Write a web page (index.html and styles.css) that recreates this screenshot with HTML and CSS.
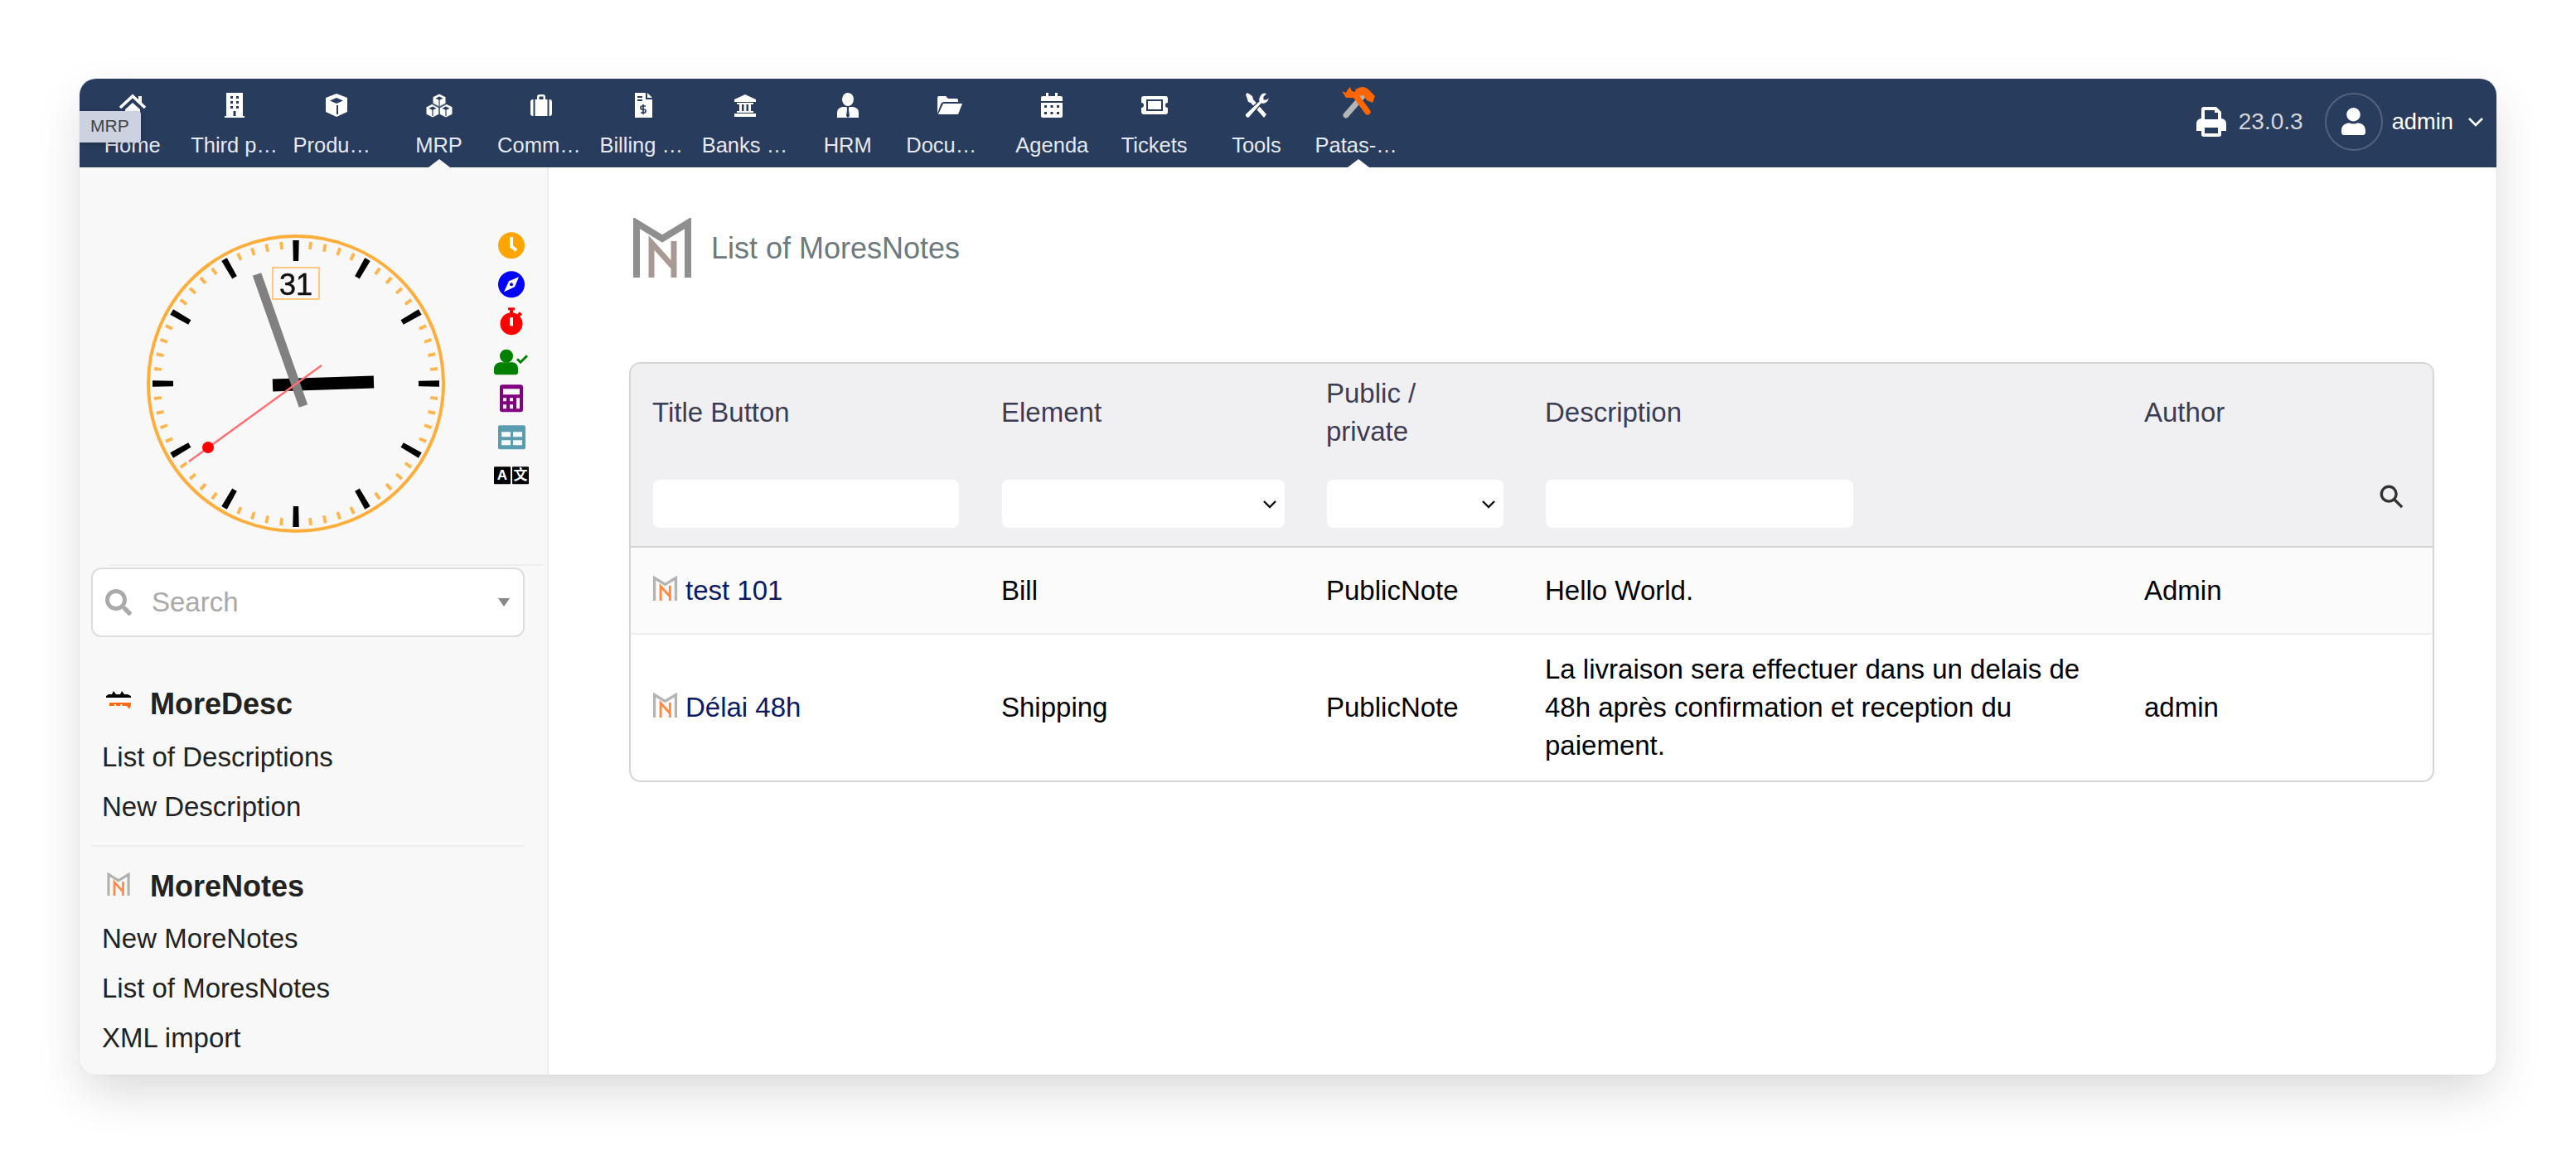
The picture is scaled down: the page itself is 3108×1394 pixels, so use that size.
FILE: index.html
```html
<!DOCTYPE html>
<html lang="en">
<head>
    <meta charset="UTF-8">
    <meta name="viewport" content="width=device-width, initial-scale=1.0">
    <title>List of MoresNotes</title>
    <link rel="stylesheet" href="styles.css">
</head>
<body>

    <svg class="defs" width="0" height="0">
        <symbol id="more-logo" viewBox="0 0 70 72">
            <path class="logo-m" d="M4 72V6l31 19L66 6v66" fill="none" stroke-width="8"/>
            <path class="logo-n" d="M22 72V30l27 30V28M49 28v44" fill="none" stroke-width="7"/>
        </symbol>
    </svg>

    <div class="window">

        <nav class="topbar">
            <a class="nav-item">
                <svg class="nav-icon" viewBox="0 0 32 32"><path d="M1 19 16 5l15 14" fill="none" stroke="#fff" stroke-width="3.5"/><path d="M7 21l9-8 9 8v10H7z" fill="#fff"/><rect x="23" y="5" width="4" height="8" fill="#fff"/></svg>
                <span class="nav-label">Home</span>
            </a>
            <a class="nav-item">
                <svg class="nav-icon" viewBox="0 0 32 32"><path d="M6 1h20v28h2v2H4v-2h2z" fill="#fff"/><path d="M11 5h3v3h-3zM18 5h3v3h-3zM11 11h3v3h-3zM18 11h3v3h-3zM11 17h3v3h-3zM18 17h3v3h-3zM14.5 23h3v6h-3z" fill="#283c5e"/></svg>
                <span class="nav-label">Third parties</span>
            </a>
            <a class="nav-item">
                <svg class="nav-icon" viewBox="0 0 32 32"><path d="M16 2l13 5v17l-13 6-13-6V7z" fill="#fff"/><path d="M16 7l8 3.5-8 3.5-8-3.5z" fill="#283c5e"/><path d="M17 16v11" stroke="#283c5e" stroke-width="2"/></svg>
                <span class="nav-label">Products | Services</span>
            </a>
            <a class="nav-item active-grey">
                <svg class="nav-icon" viewBox="0 0 32 32"><path d="M16 2l8 4v9l-8 4-8-4V6zM8 14l8 4v9l-8 4-8-4v-9zM24 14l8 4v9l-8 4-8-4v-9z" fill="#fff" stroke="#283c5e" stroke-width="1"/><path d="M16 5.500l4.500 2.200-4.500 2.300-4.500-2.300zM8 17.500l4.500 2.200L8 22l-4.500-2.300zM24 17.500l4.500 2.200L24 22l-4.500-2.300z" fill="#283c5e"/><path d="M16 10v7M8 22v7M24 22v7" stroke="#283c5e" stroke-width="1.2"/></svg>
                <span class="nav-label">MRP</span>
            </a>
            <a class="nav-item">
                <svg class="nav-icon" viewBox="0 0 32 32"><path d="M11 9V6a3 3 0 0 1 3-3h4a3 3 0 0 1 3 3v3h5a3 3 0 0 1 3 3v14a3 3 0 0 1-3 3H6a3 3 0 0 1-3-3V12a3 3 0 0 1 3-3zm2.500 0h5V5.500h-5z" fill="#fff"/><path d="M7.500 8v22M24.500 8v22" stroke="#283c5e" stroke-width="2"/></svg>
                <span class="nav-label">Commerce</span>
            </a>
            <a class="nav-item">
                <svg class="nav-icon" viewBox="0 0 32 32"><path d="M6 1h13v8h8v22H6z" fill="#fff"/><path d="M21 1l6 6h-6z" fill="#fff"/><path d="M9 6h6M9 10h6" stroke="#283c5e" stroke-width="2"/><path d="M19 17h-4a1.500 1.500 0 0 0 0 4h2a1.500 1.500 0 0 1 0 4h-4M16 15v12" fill="none" stroke="#283c5e" stroke-width="1.700"/></svg>
                <span class="nav-label">Billing &amp; Payments</span>
            </a>
            <a class="nav-item">
                <svg class="nav-icon" viewBox="0 0 32 32"><path d="M16 3l13 6v3H3V9zM3 26h26v4H3zM6 23h20v2H6zM6 13h20v2H6z" fill="#fff"/><path d="M9 15h3v8H9zM14.500 15h3v8h-3zM20 15h3v8h-3z" fill="#fff"/></svg>
                <span class="nav-label">Banks &amp; Cash</span>
            </a>
            <a class="nav-item">
                <svg class="nav-icon" viewBox="0 0 32 32"><ellipse cx="16" cy="9" rx="7" ry="8" fill="#fff"/><path d="M3 31v-6c0-5 4-7 8-7h10c4 0 8 2 8 7v6z" fill="#fff"/><path d="M14.500 18h3l-.6 3 1.100 8-2 2-2-2 1.100-8z" fill="#283c5e"/></svg>
                <span class="nav-label">HRM</span>
            </a>
            <a class="nav-item">
                <svg class="nav-icon" viewBox="0 0 32 32"><path d="M1 26V7a2 2 0 0 1 2-2h8l3 3h10a2 2 0 0 1 2 2v2H9c-2 0-3 1-4 3z" fill="#fff"/><path d="M8 14h23l-5 13H2z" fill="#fff"/></svg>
                <span class="nav-label">Documents</span>
            </a>
            <a class="nav-item">
                <svg class="nav-icon" viewBox="0 0 32 32"><path d="M3 11V7a2 2 0 0 1 2-2h4V1h3v4h8V1h3v4h4a2 2 0 0 1 2 2v4zM3 13h26v16a2 2 0 0 1-2 2H5a2 2 0 0 1-2-2z" fill="#fff"/><path d="M7 16h3v3H7zM14.500 16h3v3h-3zM22 16h3v3h-3zM7 24h3v3H7zM14.500 24h3v3h-3zM22 24h3v3h-3z" fill="#283c5e"/></svg>
                <span class="nav-label">Agenda</span>
            </a>
            <a class="nav-item">
                <svg class="nav-icon" viewBox="0 0 32 32"><path d="M3 5h26a3 3 0 0 1 3 3v5a3 3 0 0 0 0 6v5a3 3 0 0 1-3 3H3a3 3 0 0 1-3-3v-5a3 3 0 0 0 0-6V8a3 3 0 0 1 3-3z" fill="#fff"/><rect x="7" y="10" width="18" height="12" fill="#fff" stroke="#283c5e" stroke-width="2"/></svg>
                <span class="nav-label">Tickets</span>
            </a>
            <a class="nav-item">
                <svg class="nav-icon" viewBox="0 0 32 32"><path d="M3 3l2-2 6 4 1 4 16 18-3 4L9 13l-3-1z" fill="#fff"/><path d="M20 5a6 6 0 0 1 9-3l-4 4v3h3l3-3a7 7 0 0 1-9 8L8 30a3 3 0 0 1-5-4l16-15c-1-2 0-4 1-6z" fill="#fff" stroke="#283c5e" stroke-width="1.200"/></svg>
                <span class="nav-label">Tools</span>
            </a>
            <a class="nav-item active-white">
                <svg class="nav-icon patas-icon" viewBox="0 0 42 40"><path d="M6 36L27 12" stroke="#b5b5b5" stroke-width="7" stroke-linecap="round"/><path d="M18 5c5-4 11-4 15 0l8 8-3 8-7-3-4-6-6 1z" fill="#f60"/><path d="M8 5l3-3 2 5 4 1 1-5 3 8 14 19a3.500 3.500 0 0 1-6 4L15 15l-9 0-5-8 5 2z" fill="#f60"/></svg>
                <span class="nav-label">Patas-Tools</span>
            </a>

            <div class="nav-right">
                <svg class="print-icon" viewBox="0 0 36 36"><path d="M6 14V3a3 3 0 0 1 3-3h15l6 6v8a6 6 0 0 1 6 6v9h-6v4a3 3 0 0 1-3 3H9a3 3 0 0 1-3-3v-4H0v-9a6 6 0 0 1 6-6zm4-10v11h16V7h-4V4zm0 21v7h16v-7z" fill="#fff" fill-rule="evenodd"/></svg>
                <span class="version">23.0.3</span>
                <span class="avatar">
                    <svg viewBox="0 0 448 512"><path d="M224 256c70.700 0 128-57.300 128-128S294.700 0 224 0 96 57.300 96 128s57.300 128 128 128zm89.600 32h-16.700c-22.200 10.200-46.900 16-72.900 16s-50.600-5.800-72.900-16h-16.700C60.200 288 0 348.200 0 422.400V464c0 26.500 21.500 48 48 48h352c26.500 0 48-21.500 48-48v-41.600c0-74.200-60.200-134.400-134.400-134.400z" fill="#fff"/></svg>
                </span>
                <span class="user-name">admin</span>
                <svg class="user-caret" viewBox="0 0 20 12"><path d="M2 2l8 8 8-8" fill="none" stroke="#fff" stroke-width="2.600"/></svg>
            </div>
        </nav>

        <div class="tooltip">MRP</div>

        <div class="content">
            <aside class="sidebar">
                <div class="clock-area">
                    <svg class="clock" viewBox="-190 -190 380 380">
                        <circle r="178" fill="none" stroke="#ffad3b" stroke-width="4"/>
                        <circle r="167.500" pathLength="60" fill="none" stroke="#ffb54d" stroke-width="9" stroke-dasharray=".22 .78" stroke-dashoffset=".11"/>
                        <circle r="160.500" pathLength="12" fill="none" stroke="#000" stroke-width="25" stroke-dasharray=".083 .917" stroke-dashoffset=".0415"/>
                        <rect x="-28" y="-140" width="56" height="38" fill="none" stroke="#ffc880" stroke-width="2"/>
                        <text class="clock-date" x="0" y="-107" text-anchor="middle">31</text>
                        <path d="M-28 2L94-2" stroke="#000" stroke-width="15"/>
                        <path d="M-47-132L9 27" stroke="#808080" stroke-width="11"/>
                        <path d="M-129 94L31-22" stroke="#ff6f73" stroke-width="2.500"/>
                        <circle cx="-106" cy="77" r="7" fill="#f00"/>
                    </svg>
                    <div class="quick-icons">
                        <svg viewBox="0 0 48 46"><circle cx="24" cy="23" r="16" fill="#ffa500"/><path d="M24 13v11l6 5" fill="none" stroke="#fff" stroke-width="4"/></svg>
                        <svg viewBox="0 0 48 46"><circle cx="24" cy="23" r="16" fill="#00f"/><path d="M33 14l-12 5-6 13 13-6z" fill="#fff"/><circle cx="24" cy="23" r="2" fill="#00f"/></svg>
                        <svg viewBox="0 0 48 46"><circle cx="24" cy="24.500" r="13.500" fill="#f00"/><path d="M20 5h8v3h-2v4h-4V8h-2zM34 10l3 3-3 3-3-3z" fill="#f00"/><rect x="22" y="17" width="4" height="10" fill="#fff"/></svg>
                        <svg viewBox="0 0 48 46"><circle cx="18" cy="16.500" r="8" fill="green"/><path d="M3 36v-4c0-5 4-8 8-8h14c4 0 7 3 7 8v4a3 3 0 0 1-3 3H6a3 3 0 0 1-3-3z" fill="green"/><path d="M31 20l4 4 8-8" fill="none" stroke="green" stroke-width="3"/></svg>
                        <svg viewBox="0 0 48 46"><rect x="10" y="5" width="28" height="33" rx="3" fill="purple"/><path d="M14 10h20v7H14z" fill="#f8f8f8"/><path d="M14 21h4v4h-4zM22 21h4v4h-4zM30 21h4v13h-4zM14 29h4v5h-4zM22 29h4v5h-4z" fill="#f8f8f8"/></svg>
                        <svg viewBox="0 0 48 46"><rect x="8" y="7" width="33" height="29" rx="2" fill="#5b9db0"/><path d="M12 15h11v6H12zM26 15h11v6H26zM12 25h11v6H12zM26 25h11v6H26z" fill="#f8f8f8"/></svg>
                        <svg viewBox="0 0 48 46"><rect x="3" y="11" width="20" height="21" rx="1" fill="#000"/><rect x="25" y="11" width="20" height="21" rx="1" fill="#000"/><text class="lang-glyph" x="13" y="27" text-anchor="middle">A</text><text class="lang-glyph" x="35" y="27" text-anchor="middle">文</text></svg>
                    </div>
                </div>

                <div class="search-box">
                    <svg class="search-glass" viewBox="0 0 512 512"><path d="M505 442.700L405.300 343c-4.500-4.500-10.600-7-17-7H372c27.600-35.300 44-79.700 44-128C416 93.100 322.900 0 208 0S0 93.100 0 208s93.100 208 208 208c48.300 0 92.700-16.400 128-44v16.300c0 6.400 2.500 12.500 7 17l99.700 99.700c9.400 9.400 24.600 9.400 33.900 0l28.300-28.300c9.400-9.400 9.400-24.600.1-34zM208 336c-70.700 0-128-57.200-128-128 0-70.700 57.200-128 128-128 70.700 0 128 57.200 128 128 0 70.700-57.200 128-128 128z" fill="#aaa"/></svg>
                    <span class="search-text">Search</span>
                    <span class="search-caret"></span>
                </div>

                <div class="menu-block first">
                    <div class="menu-title">
                        <svg class="menu-icon desc-logo" viewBox="0 0 32 23"><path d="M1 9V7l3-2h4l2-4 3 4h5l2-4 3 4h4l4 2v2z" fill="#000"/><path d="M5 15h26v3l-2 5-3-4h-5l-1-2h-2v2h-5v-2h-2v2H5z" fill="#ff6a13"/></svg>
                        <span>MoreDesc</span>
                    </div>
                    <a class="menu-link">List of Descriptions</a>
                    <a class="menu-link">New Description</a>
                </div>

                <div class="menu-block">
                    <div class="menu-title">
                        <svg class="menu-icon small-logo"><use href="#more-logo"/></svg>
                        <span>MoreNotes</span>
                    </div>
                    <a class="menu-link">New MoreNotes</a>
                    <a class="menu-link">List of MoresNotes</a>
                    <a class="menu-link">XML import</a>
                </div>
            </aside>

            <main class="main">
                <div class="page-title">
                    <svg class="title-logo"><use href="#more-logo"/></svg>
                    <h1>List of MoresNotes</h1>
                </div>

                <div class="table-box">
                    <table class="notes-table">
                        <colgroup>
                            <col class="col-title">
                            <col class="col-element">
                            <col class="col-public">
                            <col class="col-desc">
                            <col class="col-author">
                        </colgroup>
                        <thead>
                            <tr class="head-row">
                                <th>Title Button</th>
                                <th>Element</th>
                                <th>Public /<br>private</th>
                                <th>Description</th>
                                <th>Author</th>
                            </tr>
                            <tr class="filter-row">
                                <td><div class="filter-field field-title"></div></td>
                                <td>
                                    <div class="filter-field field-element">
                                        <svg class="select-chevron" viewBox="0 0 20 12"><path d="M3 2l7 7 7-7" fill="none" stroke="#111" stroke-width="2.400"/></svg>
                                    </div>
                                </td>
                                <td>
                                    <div class="filter-field field-public">
                                        <svg class="select-chevron" viewBox="0 0 20 12"><path d="M3 2l7 7 7-7" fill="none" stroke="#111" stroke-width="2.400"/></svg>
                                    </div>
                                </td>
                                <td><div class="filter-field field-desc"></div></td>
                                <td class="filter-action">
                                    <svg class="filter-search" viewBox="0 0 32 32"><circle cx="13" cy="13" r="9.500" fill="none" stroke="#333" stroke-width="3.600"/><path d="M20 20l10 10" stroke="#333" stroke-width="3.600"/></svg>
                                </td>
                            </tr>
                        </thead>
                        <tbody>
                            <tr class="row-odd">
                                <td><a class="note-link"><svg class="row-logo"><use href="#more-logo"/></svg>test 101</a></td>
                                <td>Bill</td>
                                <td>PublicNote</td>
                                <td>Hello World.</td>
                                <td>Admin</td>
                            </tr>
                            <tr class="row-even">
                                <td><a class="note-link"><svg class="row-logo"><use href="#more-logo"/></svg>Délai 48h</a></td>
                                <td>Shipping</td>
                                <td>PublicNote</td>
                                <td>La livraison sera effectuer dans un delais de 48h après confirmation et reception du paiement.</td>
                                <td>admin</td>
                            </tr>
                        </tbody>
                    </table>
                </div>
            </main>
        </div>
    </div>

</body>
</html>
```

FILE: styles.css
```css
body {
    font-family: "Liberation Sans", Arial, sans-serif;
    font-size: 33px;
    line-height: 46px;
    margin: 0;
    padding: 0;
    background-color: #fff;
    color: #000;
}

.defs {
    position: absolute;
}

.window {
    position: relative;
    width: 2916px;
    height: 1202px;
    margin: 95px 0 0 96px;
    border-radius: 20px;
    overflow: hidden;
    background-color: #fff;
}

body::before {
    content: "";
    position: absolute;
    left: 96px;
    top: 95px;
    width: 2916px;
    height: 1202px;
    border-radius: 20px;
    box-shadow: 0 0 1px rgba(0, 0, 0, 0.35), 0 24px 60px -6px rgba(0, 0, 0, 0.16);
}

/* top bar */
.topbar {
    display: flex;
    height: 107px;
    padding-left: 2px;
    background-color: #283c5e;
}

.nav-item {
    position: relative;
    display: flex;
    flex-direction: column;
    align-items: center;
    width: 123.3px;
    flex: none;
    padding-top: 16px;
    box-sizing: border-box;
}

.nav-icon {
    width: 32px;
    height: 32px;
    display: block;
}

.patas-icon {
    width: 42px;
    height: 40px;
    margin-top: -8px;
}

.nav-label {
    display: block;
    width: 105.5px;
    margin-top: 15px;
    font-size: 25.5px;
    line-height: 34px;
    color: #e6e9f0;
    text-align: center;
    white-space: nowrap;
    overflow: hidden;
    text-overflow: ellipsis;
}

.active-grey::after,
.active-white::after {
    content: "";
    position: absolute;
    bottom: 0;
    left: 50%;
    margin-left: -13px;
    border-left: 13px solid transparent;
    border-right: 13px solid transparent;
    border-bottom: 10px solid #f8f8f8;
}

.active-white::after {
    border-bottom-color: #fff;
}

.nav-right {
    display: flex;
    align-items: center;
    margin-left: auto;
    padding-right: 15px;
    padding-bottom: 4px;
}

.print-icon {
    width: 36px;
    height: 36px;
}

.version {
    margin-left: 15px;
    font-size: 28px;
    color: #d4d6da;
}

.avatar {
    display: flex;
    align-items: center;
    justify-content: center;
    width: 70px;
    height: 70px;
    margin-left: 26px;
    box-sizing: border-box;
    border: 2px solid rgba(255, 255, 255, 0.2);
    border-radius: 50%;
}

.avatar svg {
    width: 29px;
    height: 33px;
}

.user-name {
    margin-left: 11px;
    font-size: 27.3px;
    color: #fff;
}

.user-caret {
    width: 20px;
    height: 12px;
    margin-left: 17px;
}

.tooltip {
    position: absolute;
    left: 0;
    top: 39px;
    width: 74px;
    height: 38px;
    padding-left: 13px;
    box-sizing: border-box;
    background-color: #ccd2df;
    color: #444;
    font-size: 21px;
    line-height: 36px;
    border-radius: 0 4px 4px 0;
    box-shadow: 0 2px 6px rgba(0, 0, 0, 0.25);
}

/* sidebar */
.content {
    display: flex;
    height: 1095px;
}

.sidebar {
    width: 566px;
    flex: none;
    padding-left: 14px;
    box-sizing: border-box;
    background-color: #f8f8f8;
    border-right: 2px solid #eee;
}

.clock-area {
    display: flex;
    height: 481px;
    box-sizing: border-box;
    margin: 0 5px 0 22px;
    padding: 71px 0 0 35px;
    border-bottom: 2px solid #eee;
}

.clock {
    width: 380px;
    height: 380px;
    flex: none;
    filter: blur(0.5px);
}

.clock-date {
    font-size: 36px;
    fill: #111;
    stroke: #111;
    stroke-width: 0.5px;
}

.quick-icons {
    display: flex;
    flex-direction: column;
    margin-left: 46px;
}

.quick-icons svg {
    display: block;
    width: 48px;
    height: 46.5px;
    flex: none;
}

.lang-glyph {
    font-family: "Liberation Sans", "Noto Sans CJK SC", sans-serif;
    font-size: 17px;
    font-weight: bold;
    fill: #fff;
}

.search-box {
    display: flex;
    align-items: center;
    width: 523px;
    height: 84px;
    margin-top: 2px;
    padding: 0 16px 0 15px;
    box-sizing: border-box;
    background-color: #fff;
    border: 2px solid #ddd;
    border-radius: 12px;
}

.search-glass {
    width: 32px;
    height: 32px;
}

.search-text {
    margin-left: 24px;
    color: #a9a9a9;
}

.search-caret {
    margin-left: auto;
    border-left: 7.5px solid transparent;
    border-right: 7.5px solid transparent;
    border-top: 10px solid #888;
}

.menu-block {
    width: 523px;
    padding-top: 25px;
    padding-bottom: 16px;
    border-bottom: 2px solid #eee;
}

.menu-block.first {
    padding-top: 58px;
}

.menu-block:last-child {
    border-bottom: none;
}

.menu-title {
    display: flex;
    align-items: center;
    height: 46px;
    margin-bottom: 10px;
    padding-left: 17px;
    font-size: 36px;
    font-weight: bold;
    color: #222;
}

.menu-block.first .menu-title {
    margin-bottom: 11px;
}

.menu-icon {
    width: 32px;
    margin-right: 22px;
    flex: none;
    filter: blur(0.4px);
}

.desc-logo {
    height: 23px;
    margin-top: -11px;
}

.small-logo {
    height: 28px;
    margin-top: -7px;
    --m-color: #b0b0b0;
    --n-color: #ff8a45;
}

.menu-link {
    display: block;
    height: 60px;
    padding-left: 13px;
    line-height: 60px;
    color: #222;
}

.logo-m {
    stroke: var(--m-color);
}

.logo-n {
    stroke: var(--n-color);
}

/* main panel */
.main {
    flex: 1;
    padding: 61px 75px 0 97px;
}

.page-title {
    display: flex;
    align-items: center;
    height: 72px;
    margin-left: 5px;
}

.title-logo {
    width: 70px;
    height: 72px;
    filter: blur(0.6px);
    --m-color: #8f8f8f;
    --n-color: #a89a92;
}

.page-title h1 {
    margin: 2px 0 0 24px;
    font-size: 36px;
    font-weight: normal;
    color: #6c7a7e;
}

.table-box {
    margin-top: 102px;
    border: 2px solid #d5d5d5;
    border-radius: 14px;
    overflow: hidden;
}

.notes-table {
    width: 100%;
    border-collapse: collapse;
    table-layout: fixed;
}

.col-title { width: 422px; }
.col-element { width: 392px; }
.col-public { width: 264px; }
.col-desc { width: 723px; }

.head-row th,
.filter-row td {
    background-color: #f0f0f2;
}

.head-row th {
    height: 116px;
    padding: 2px 26px 0 25px;
    box-sizing: border-box;
    font-weight: normal;
    text-align: left;
    color: #3c3d55;
}

.head-row th:first-child {
    padding-left: 26px;
}

.filter-row td {
    height: 104px;
    padding: 24px 0 22px 26px;
    box-sizing: border-box;
    border-bottom: 2px solid #d5d5d5;
}

.filter-field {
    position: relative;
    height: 58px;
    background-color: #fff;
    border-radius: 8px;
}

.field-title { width: 369px; margin-left: 1px; }
.field-element { width: 341px; }
.field-public { width: 213px; }
.field-desc { width: 371px; }

.select-chevron {
    position: absolute;
    right: 8px;
    top: 24px;
    width: 20px;
    height: 12px;
}

.filter-row .filter-action {
    padding-right: 35px;
    vertical-align: top;
}

.filter-search {
    display: block;
    width: 30px;
    height: 30px;
    margin: 5px 0 0 auto;
}

.notes-table tbody td {
    padding: 19px 26px 19px 25px;
    box-sizing: border-box;
}

.notes-table tbody td:first-child {
    padding-left: 26px;
}

.row-odd td {
    height: 105px;
    background-color: #fbfbfb;
    border-bottom: 2px solid #eee;
}

.note-link {
    display: flex;
    align-items: center;
    color: #0b1a63;
}

.row-logo {
    width: 31px;
    height: 30px;
    margin-right: 9px;
    margin-top: -6px;
    flex: none;
    filter: blur(0.4px);
    --m-color: #b4b4b4;
    --n-color: #ff8a45;
}
```
